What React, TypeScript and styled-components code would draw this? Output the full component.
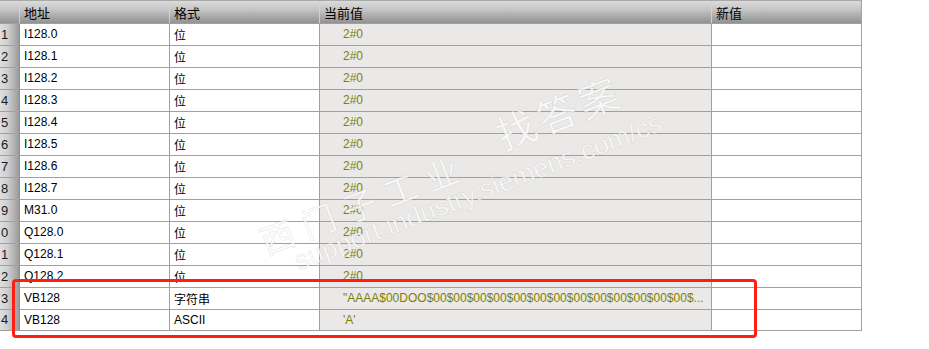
import React from "react";
import styled, { createGlobalStyle } from "styled-components";

const rows = [
  { addr: "I128.0", fmt: "位", value: "2#0" },
  { addr: "I128.1", fmt: "位", value: "2#0" },
  { addr: "I128.2", fmt: "位", value: "2#0" },
  { addr: "I128.3", fmt: "位", value: "2#0" },
  { addr: "I128.4", fmt: "位", value: "2#0" },
  { addr: "I128.5", fmt: "位", value: "2#0" },
  { addr: "I128.6", fmt: "位", value: "2#0" },
  { addr: "I128.7", fmt: "位", value: "2#0" },
  { addr: "M31.0", fmt: "位", value: "2#0" },
  { addr: "Q128.0", fmt: "位", value: "2#0" },
  { addr: "Q128.1", fmt: "位", value: "2#0" },
  { addr: "Q128.2", fmt: "位", value: "2#0" },
  {
    addr: "VB128",
    fmt: "字符串",
    value: '"AAAA$00DOO' + "$00".repeat(13) + "$...",
  },
  { addr: "VB128", fmt: "ASCII", value: "'A'" },
];

const App = () => (
  <>
    <GlobalStyle />
    <Page>
      <Table>
        <HeaderRow>
          <HeadCell />
          <HeadCell>地址</HeadCell>
          <HeadCell>格式</HeadCell>
          <HeadCell>当前值</HeadCell>
          <HeadCell>新值</HeadCell>
        </HeaderRow>
        {rows.map((r, i) => (
          <Row key={i}>
            <NumCell>{(i + 1) % 10}</NumCell>
            <Cell>{r.addr}</Cell>
            <Cell>{r.fmt}</Cell>
            <ValueCell>{r.value}</ValueCell>
            <Cell />
          </Row>
        ))}
      </Table>

      <Watermark>
        <Mark $x={498} $y={138} $size={40} $spacing={4}>找答案</Mark>
        <Mark $x={262} $y={244} $size={34} $spacing={10}>西门子工业</Mark>
        <Mark $x={296} $y={262} $size={27} $spacing={0}>
          support.industry.siemens.com/cs
        </Mark>
      </Watermark>

      <Highlight />
    </Page>
  </>
);

export default App;

const GlobalStyle = createGlobalStyle`
  html, body {
    margin: 0;
    padding: 0;
    background: #fff;
  }
  body {
    font-family: "Liberation Sans", "Noto Sans CJK SC", sans-serif;
    font-size: 12px;
    color: #000;
  }
`;

const Page = styled.div`
  position: relative;
  width: 929px;
  height: 349px;
  overflow: hidden;
`;

const Table = styled.div`
  display: flex;
  flex-direction: column;
  width: 862px;
`;

const columns = "20px 150px 150px 392px 150px";

const HeaderRow = styled.div`
  display: grid;
  grid-template-columns: ${columns};
  height: 23px;
  background: linear-gradient(#dcdcdc, #c4c4c4 40%, #a2a2a2 80%, #929292);
  border-top: 1px solid #a8a8a8;
  box-sizing: border-box;
`;

const HeadCell = styled.div`
  display: flex;
  align-items: center;
  padding-left: 4px;
  border-right: 1px solid #d2d2d2;
  font-size: 13px;
  &:last-child {
    border-right-color: #a0a0a0;
  }
`;

const Row = styled.div`
  display: grid;
  grid-template-columns: ${columns};
  height: 22px;
  box-sizing: border-box;
  border-top: 1px solid #a0a0a0;
  &:first-of-type {
    border-top: none;
  }
  &:last-child {
    border-bottom: 1px solid #a0a0a0;
  }
`;

const Cell = styled.div`
  display: flex;
  align-items: center;
  padding-left: 4px;
  padding-bottom: 1px;
  white-space: nowrap;
  overflow: hidden;
  background: #fff;
  border-right: 1px solid #a0a0a0;
`;

const NumCell = styled.div`
  display: flex;
  align-items: center;
  padding-left: 1px;
  padding-bottom: 1px;
  color: #1a1a1a;
  font-size: 13px;
  background: linear-gradient(90deg, #dedede, #cfcfcf 40%, #a9a9a9 85%, #9a9a9a);
  border-right: 1px solid #8e8e8e;
`;

const ValueCell = styled(Cell)`
  background: #ebe9e7;
  color: #808000;
  padding-left: 23px;
`;

const Watermark = styled.div`
  position: absolute;
  inset: 0;
  pointer-events: none;
`;

const Mark = styled.div<{ $x: number; $y: number; $size: number; $spacing: number }>`
  position: absolute;
  left: ${(p) => p.$x}px;
  top: ${(p) => p.$y - p.$size / 2}px;
  font-size: ${(p) => p.$size}px;
  line-height: 1;
  letter-spacing: ${(p) => p.$spacing}px;
  font-family: "Liberation Sans", "Noto Sans CJK SC", sans-serif;
  white-space: nowrap;
  color: rgba(255, 255, 255, 0.75);
  -webkit-text-stroke: 1px rgba(120, 120, 120, 0.14);
  transform: rotate(-21deg);
  transform-origin: 0 50%;
`;

const Highlight = styled.div`
  position: absolute;
  left: 12px;
  top: 279px;
  width: 745px;
  height: 59px;
  box-sizing: border-box;
  border: 3px solid #ff1e12;
  border-radius: 4px;
`;
